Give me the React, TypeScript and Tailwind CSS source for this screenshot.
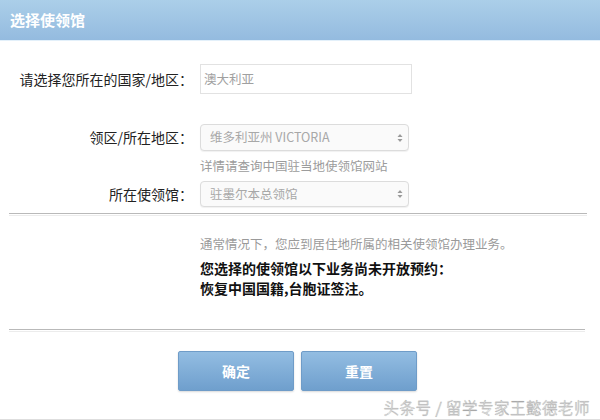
import React from "react";

function SelectArrows() {
  return (
    <svg width="6" height="10" viewBox="0 0 6 10" className="text-[#9a9a9a]">
      <path d="M0.5 4 L3 1 L5.5 4 Z" fill="currentColor" />
      <path d="M0.5 6 L3 9 L5.5 6 Z" fill="currentColor" />
    </svg>
  );
}

function FakeSelect({ value, className = "" }: { value: string; className?: string }) {
  return (
    <div
      className={`flex w-[209px] items-center justify-between rounded-[4px] border border-[#dcdcdc] bg-[#fafafa] pl-[9px] pr-[5px] text-[12.5px] text-[#a8a8a8] shadow-[0_1px_1px_rgba(0,0,0,0.06)] ${className}`}
    >
      <span>{value}</span>
      <SelectArrows />
    </div>
  );
}

export default function App() {
  return (
    <div className="relative h-[420px] w-[600px] overflow-hidden border-b border-[#dedede] bg-white font-['Noto_Sans_CJK_SC','Noto_Sans',sans-serif] text-[#222]">
      <div className="flex h-[41px] items-center border-b border-[#e3f0fa] bg-gradient-to-b from-[#abcfe9] to-[#94bbdf] px-[10px] text-[15px] font-bold text-white">
        选择使领馆
      </div>

      <div className="mt-[23px] flex h-[30px] items-center">
        <label className="w-[193px] text-right text-[14px]">请选择您所在的国家/地区：</label>
        <div className="ml-[7px] flex h-[30px] w-[212px] items-center border border-[#e2e2e2] pl-[3px] text-[12.5px] text-[#a0a0a0]">
          澳大利亚
        </div>
      </div>

      <div className="mt-[30px] flex h-[27px] items-center">
        <label className="w-[193px] text-right text-[14px]">领区/所在地区：</label>
        <FakeSelect value="维多利亚州 VICTORIA" className="ml-[7px] h-[27px]" />
      </div>

      <p className="mt-[6px] pl-[200px] text-[12.5px] leading-[18px] text-[#9c9c9c]">
        详情请查询中国驻当地使领馆网站
      </p>

      <div className="mt-[6px] flex h-[26px] items-center">
        <label className="w-[193px] text-right text-[14px]">所在使领馆：</label>
        <FakeSelect value="驻墨尔本总领馆" className="ml-[7px] h-[26px]" />
      </div>

      <div className="ml-[9px] mr-[13px] mt-[6px] h-[2px] border-t border-[#b9b9b9] shadow-[0_1px_0_#ececec]" />

      <div className="mt-[19px] pl-[200px]">
        <p className="text-[12.5px] leading-[20px] text-[#9a9a9a]">
          通常情况下，您应到居住地所属的相关使领馆办理业务。
        </p>
        <p className="mt-[4px] text-[14px] font-bold leading-[20px] text-[#111]">
          您选择的使领馆以下业务尚未开放预约：
        </p>
        <p className="text-[14px] font-bold leading-[20px] text-[#111]">恢复中国国籍,台胞证签注。</p>
      </div>

      <div className="ml-[9px] mr-[15px] mt-[31px] h-[2px] border-t border-[#b9b9b9] shadow-[0_1px_0_#ececec]" />

      <div className="ml-[178px] mt-[20px] flex gap-[7px]">
        <button
          type="button"
          className="h-[40px] w-[116px] rounded-[2px] border border-[#6f9cc8] bg-gradient-to-b from-[#93bde2] to-[#6f9fcd] text-[14px] font-bold text-white shadow-[0_1px_2px_rgba(0,0,0,0.15)]"
        >
          确定
        </button>
        <button
          type="button"
          className="h-[40px] w-[116px] rounded-[2px] border border-[#6f9cc8] bg-gradient-to-b from-[#93bde2] to-[#6f9fcd] text-[14px] font-bold text-white shadow-[0_1px_2px_rgba(0,0,0,0.15)]"
        >
          重置
        </button>
      </div>

      <div className="absolute bottom-[3px] right-[10px] text-[15.5px] font-light leading-[18px] tracking-[0.5px] text-white [-webkit-text-stroke:0.3px_#9a9a9a] [text-shadow:0_0_1px_#b0b0b0]">
        头条号 / 留学专家王懿德老师
      </div>
    </div>
  );
}
